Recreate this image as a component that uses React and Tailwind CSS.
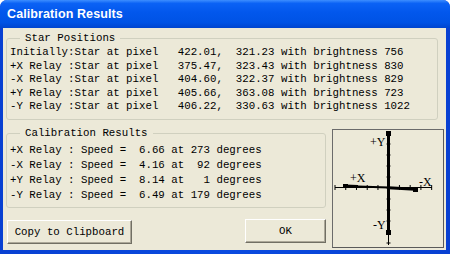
import React from "react";

const stars = [
  "Initially:Star at pixel   422.01,  321.23 with brightness 756",
  "+X Relay :Star at pixel   375.47,  323.43 with brightness 830",
  "-X Relay :Star at pixel   404.60,  322.37 with brightness 829",
  "+Y Relay :Star at pixel   405.66,  363.08 with brightness 723",
  "-Y Relay :Star at pixel   406.22,  330.63 with brightness 1022",
];

const results = [
  "+X Relay : Speed =  6.66 at 273 degrees",
  "-X Relay : Speed =  4.16 at  92 degrees",
  "+Y Relay : Speed =  8.14 at   1 degrees",
  "-Y Relay : Speed =  6.49 at 179 degrees",
];

const mono = "font-['Liberation_Mono','DejaVu_Sans_Mono',monospace] text-[10.75px] text-black";

function Chart() {
  const xTicks = Array.from({ length: 10 }, (_, i) => 335 + i * 10.74);
  const yTicks = Array.from({ length: 11 }, (_, i) => 133 + i * 11);
  return (
    <div className="ml-[4px] mt-[2.5px] w-[112px] h-[119px] border border-t-[#6b6b6b] border-l-[#6b6b6b] border-r-[#5a5a5a] border-b-[#5a5a5a] bg-[#ECE9D8]">
      <svg width="110" height="117" viewBox="333 130 110 117">
        {/* axes */}
        <line x1="335" y1="187.5" x2="432" y2="187.5" stroke="#000" strokeWidth="1" />
        <line x1="388.5" y1="132" x2="388.5" y2="245" stroke="#000" strokeWidth="1" />
        {xTicks.map((x) => (
          <line key={x} x1={x} y1="185" x2={x} y2="190" stroke="#000" strokeWidth="1" />
        ))}
        {yTicks.map((y) => (
          <line key={y} x1="386.5" y1={y} x2="390.5" y2={y} stroke="#000" strokeWidth="1" />
        ))}
        {/* relay vectors */}
        <line x1="388.5" y1="133" x2="388.5" y2="233" stroke="#000" strokeWidth="3" />
        <rect x="386" y="131" width="5" height="5" fill="#000" />
        <rect x="386" y="230" width="5" height="5" fill="#000" />
        <line x1="345" y1="186" x2="358" y2="186.4" stroke="#000" strokeWidth="3" />
        <line x1="358" y1="186.4" x2="388.5" y2="187.5" stroke="#000" strokeWidth="2" />
        <rect x="343" y="184" width="5" height="4" fill="#000" />
        <line x1="388.5" y1="187.8" x2="415" y2="189.3" stroke="#000" strokeWidth="3" />
        <rect x="413" y="187" width="5" height="5" fill="#000" />
        <text x="370" y="146" fontFamily="Liberation Serif, serif" fontSize="12" fill="#000">+Y</text>
        <text x="373" y="229" fontFamily="Liberation Serif, serif" fontSize="12" fill="#000">-Y</text>
        <text x="350" y="182" fontFamily="Liberation Serif, serif" fontSize="12" fill="#000">+X</text>
        <text x="419" y="186" fontFamily="Liberation Serif, serif" fontSize="12" fill="#000">-X</text>
      </svg>
    </div>
  );
}

function Button({ children, className }) {
  return (
    <button
      className={
        "bg-[#ECE9D8] border border-t-white border-l-white border-r-[#716F64] border-b-[#716F64] shadow-[inset_-1px_-1px_#ACA899] " +
        mono +
        " " +
        className
      }
    >
      {children}
    </button>
  );
}

export default function App() {
  return (
    <div className="w-[450px] h-[254px] flex flex-col rounded-t-[7px] overflow-hidden bg-[#0A3FD6]">
      <div className="h-[28px] shrink-0 flex items-center px-[7px] bg-[linear-gradient(180deg,#3D8EFF_0%,#0B62F5_12%,#0257EC_45%,#0053E5_80%,#0045CF_100%)]">
        <span className="font-['Liberation_Sans',Arial,sans-serif] font-bold text-[12.5px] text-white tracking-[0.1px]">
          Calibration Results
        </span>
      </div>
      <div className="flex-1 flex pl-[3px] pr-[4px] pb-[4px] bg-[linear-gradient(90deg,#0840D2,#0A4BE0_50%,#0840D2)]">
        <div className="flex-1 bg-[#ECE9D8] flex flex-col">
          <fieldset className="ml-[3px] mt-[3.5px] w-[432px] border border-[#D0D0BF] rounded-[3px] pl-[3px] pt-[1.5px] pb-[5px]">
            <legend className={mono + " ml-[10px] px-[5px] leading-[13px]"}>Star Positions</legend>
            {stars.map((s) => (
              <div key={s} className={mono + " whitespace-pre leading-[13.5px]"}>
                {s}
              </div>
            ))}
          </fieldset>
          <div className="flex items-start ml-[3px] mt-[7px]">
            <div className="w-[322px] flex flex-col">
              <fieldset className="w-[320px] border border-[#D0D0BF] rounded-[3px] pl-[3px] pt-[3px] pb-[3px]">
                <legend className={mono + " ml-[10px] px-[5px] leading-[13px]"}>Calibration Results</legend>
                {results.map((s) => (
                  <div key={s} className={mono + " whitespace-pre leading-[15.3px]"}>
                    {s}
                  </div>
                ))}
              </fieldset>
              <div className="flex items-start justify-between mt-[11px]">
                <Button className="ml-[1px] mt-[1px] w-[125px] h-[24px]">Copy to Clipboard</Button>
                <Button className="mr-[2px] w-[81px] h-[24px]">OK</Button>
              </div>
            </div>
            <Chart />
          </div>
        </div>
      </div>
    </div>
  );
}
